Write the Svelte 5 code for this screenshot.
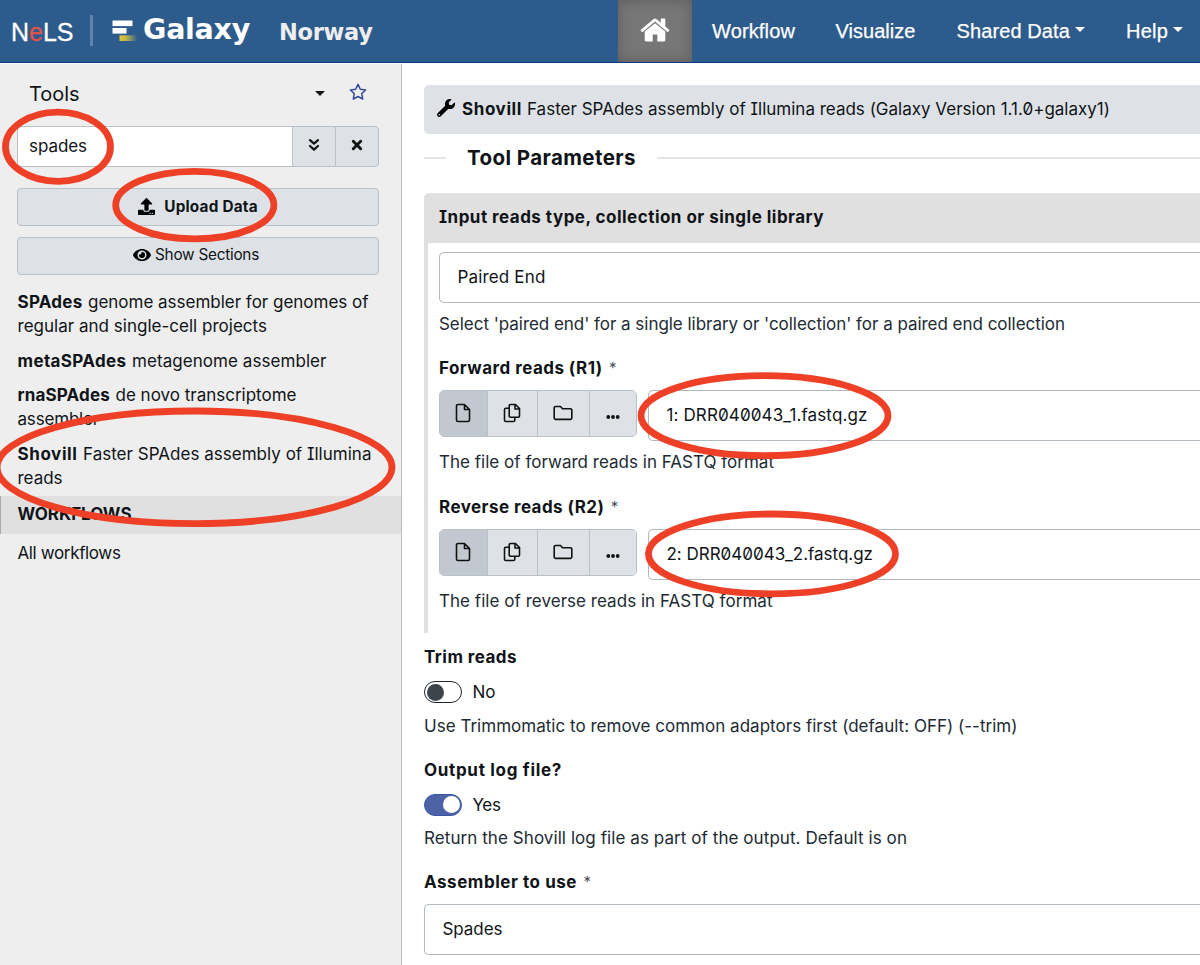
<script>
  // Spreads a run of text to the given width through its letter spacing.
  function fit(node, width) {
    node.style.letterSpacing = '0px';
    const natural = node.getBoundingClientRect().width;
    node.style.letterSpacing = (width - natural) / node.textContent.length + 'px';
  }

  const tools = [
    { lines: [[['SPAdes', 65, true], ['genome assembler for genomes of', 280.5]], [['regular and single-cell projects', 249.5]]] },
    { lines: [[['metaSPAdes', 109, true], ['metagenome assembler', 194.5]]] },
    { lines: [[['rnaSPAdes', 92.5, true], ['de novo transcriptome', 181]], [['assembler', 81.5]]] },
    { lines: [[['Shovill', 60, true], ['Faster SPAdes assembly of Illumina', 288.5]], [['reads', 45]]] }
  ];

  const inputs = [
    { label: 'Forward reads (R1)', lw: 163, file: '1: DRR040043_1.fastq.gz', fw: 201, help: 'The file of forward reads in FASTQ format', hw: 335 },
    { label: 'Reverse reads (R2)', lw: 165, file: '2: DRR040043_2.fastq.gz', fw: 206.5, help: 'The file of reverse reads in FASTQ format', hw: 333.5 }
  ];

  const rings = [
    [58, 146.7, 52.5, 34.6],
    [194.8, 205.1, 79.1, 33.8],
    [194.5, 467.3, 197.5, 56.3],
    [764.5, 415.7, 123.5, 40],
    [772, 553.9, 123.5, 39.9]
  ];
</script>

{#snippet text(value, width, bold = false)}
  <span class="text" class:bold use:fit={width}>{value}</span>
{/snippet}

<div class="app">
  <header>
    <div class="nels"><b class="text" use:fit={62.5}>N<span>e</span>LS</b></div>
    <div class="rule"></div>
    <svg class="logo" width="27" height="22" viewBox="0 0 27 22">
      <defs><linearGradient id="fade"><stop offset="0" stop-color="#d9c53c" /><stop offset=".35" stop-color="#c3b84a" /><stop offset="1" stop-color="#2d5b8b" /></linearGradient></defs>
      <rect x="0.5" y="0.5" width="20" height="5.6" fill="#fff" /><rect x="0.5" y="8" width="14" height="5.6" fill="#fff" /><rect x="7.5" y="15.3" width="18" height="5.7" fill="url(#fade)" />
    </svg>
    <div class="galaxy"><span class="text" use:fit={107}>Galaxy</span></div>
    <div class="norway"><span class="text" use:fit={93.5}>Norway</span></div>
    <nav>
      <div class="home">
        <svg width="32" height="32" viewBox="0 0 1792 1792" fill="#fff"><path d="M1472 992v480q0 26-19 45t-45 19h-384v-384h-256v384h-384q-26 0-45-19t-19-45v-480q0-1 .5-3t.5-3l575-474 575 474q1 2 1 6zm223-69l-62 74q-8 9-21 11h-3q-13 0-21-7l-692-577-692 577q-12 8-24 7-13-2-21-11l-62-74q-8-10-7-23.5t11-21.5l719-599q32-26 76-26t76 26l244 204v-195q0-14 9-23t23-9h192q14 0 23 9t9 23v408l219 182q10 8 11 21.5t-7 23.5z" /></svg>
      </div>
      <a><span class="text" use:fit={83}>Workflow</span></a>
      <a><span class="text" use:fit={80}>Visualize</span></a>
      <a><span class="text" use:fit={113.5}>Shared Data</span><i class="caret"></i></a>
      <a><span class="text" use:fit={42}>Help</span><i class="caret"></i></a>
    </nav>
  </header>

  <div class="body">
    <aside>
      <div class="title">
        <span class="text" use:fit={50.5}>Tools</span>
        <i class="caret"></i>
        <svg width="18" height="18" viewBox="0 0 18 18" fill="none" stroke="#344a9b" stroke-width="1.5" stroke-linejoin="round"><path d="M9 1.4l2.3 4.9 5.3.7-3.9 3.7 1 5.4L9 13.5l-4.7 2.6 1-5.4L1.4 7l5.3-.7z" /></svg>
      </div>
      <div class="search">
        <div class="field">{@render text('spades', 58)}</div>
        <button class="more"><svg width="12" height="14" viewBox="0 0 12 14" fill="none" stroke="#111" stroke-width="2.3" stroke-linecap="round" stroke-linejoin="round"><path d="M2 2.2l4 3.4 4-3.4M2 8l4 3.6L10 8" /></svg></button>
        <button class="clear"><svg width="12" height="12" viewBox="0 0 12 12" fill="none" stroke="#111" stroke-width="3" stroke-linecap="round"><path d="M2.3 2.3l7.4 7.4M9.7 2.3L2.3 9.7" /></svg></button>
      </div>
      <button class="wide upload">
        <svg width="17" height="17" viewBox="0 0 512 512"><path d="M296 384h-80c-13.3 0-24-10.7-24-24V192h-87.7c-17.8 0-26.7-21.5-14.1-34.1L242.3 5.7c7.5-7.5 19.8-7.5 27.3 0l152.2 152.2c12.6 12.6 3.7 34.1-14.1 34.1H320v168c0 13.3-10.7 24-24 24zm216-8v112c0 13.3-10.7 24-24 24H24c-13.3 0-24-10.7-24-24V376c0-13.3 10.7-24 24-24h136v8c0 30.9 25.1 56 56 56h80c30.9 0 56-25.1 56-56v-8h136c13.3 0 24 10.7 24 24zm-124 88c0-11-9-20-20-20s-20 9-20 20 9 20 20 20 20-9 20-20zm64 0c0-11-9-20-20-20s-20 9-20 20 9 20 20 20 20-9 20-20z" /></svg>
        {@render text('Upload Data', 93.5, true)}
      </button>
      <button class="wide sections">
        <svg width="18" height="16" viewBox="0 0 576 512"><path d="M572.52 241.4C518.29 135.59 410.93 64 288 64S57.68 135.64 3.48 241.41a32.35 32.35 0 0 0 0 29.19C57.71 376.41 165.07 448 288 448s230.32-71.64 284.52-177.41a32.35 32.35 0 0 0 0-29.19zM288 400a144 144 0 1 1 144-144 143.93 143.93 0 0 1-144 144zm0-240a95.31 95.31 0 0 0-25.31 3.79 47.85 47.85 0 0 1-66.9 66.9A95.78 95.78 0 1 0 288 160z" /></svg>
        {@render text('Show Sections', 104)}
      </button>
      <div class="tools">
        {#each tools as tool}
          <div class="tool">
            {#each tool.lines as line}
              <div class="line">{#each line as [value, width, bold]}{@render text(value, width, bold)}{/each}</div>
            {/each}
          </div>
        {/each}
      </div>
      <div class="workflows">{@render text('WORKFLOWS', 114, true)}</div>
      <div class="all">{@render text('All workflows', 103)}</div>
    </aside>

    <main>
      <div class="toolbar">
        <svg width="18" height="18" viewBox="0 0 512 512"><path d="M507.73 109.1c-2.24-9.03-13.54-12.09-20.12-5.51l-74.36 74.36-67.88-11.31-11.31-67.88 74.36-74.36c6.62-6.62 3.43-17.9-5.66-20.16-47.38-11.74-99.55.91-136.58 37.93-39.64 39.64-50.55 97.1-34.05 147.2L18.74 402.76c-24.99 24.99-24.99 65.51 0 90.5 24.99 24.99 65.51 24.99 90.5 0l213.21-213.21c50.12 16.71 107.47 5.68 147.37-34.22 37.07-37.07 49.7-89.32 37.91-136.73zM64 472c-13.25 0-24-10.75-24-24 0-13.26 10.75-24 24-24s24 10.74 24 24c0 13.25-10.75 24-24 24z" /></svg>
        {@render text('Shovill', 60, true)}
        {@render text('Faster SPAdes assembly of Illumina reads (Galaxy Version 1.1.0+galaxy1)', 583)}
      </div>
      <div class="divider"><i class="short"></i><h2><span class="text" use:fit={169}>Tool Parameters</span></h2><i class="long"></i></div>

      <section>
        <div class="head">{@render text('Input reads type, collection or single library', 385, true)}</div>
        <div class="content">
          <div class="select">{@render text('Paired End', 88)}</div>
          <div class="help">{@render text("Select 'paired end' for a single library or 'collection' for a paired end collection", 626)}</div>
          {#each inputs as input}
            <div class="label">{@render text(input.label, input.lw, true)}<span class="star">*</span></div>
            <div class="data">
              <div class="group">
                <button class="on"><svg width="16" height="20" viewBox="0 0 16 20"><path d="M3 1.5h6.5l5 5V17a1.5 1.5 0 0 1-1.5 1.5H3A1.5 1.5 0 0 1 1.5 17V3A1.5 1.5 0 0 1 3 1.5zM9.5 1.5v5h5" /></svg></button>
                <button><svg width="18" height="20" viewBox="0 0 18 20"><path d="M7.5 1.5h5l4 4V13a1.3 1.3 0 0 1-1.3 1.3H7.5A1.3 1.3 0 0 1 6.2 13V2.8A1.3 1.3 0 0 1 7.5 1.5zM12 1.5v4.5h4.5M6 5.3H2.8A1.3 1.3 0 0 0 1.5 6.6v10.6a1.3 1.3 0 0 0 1.3 1.3h7.7a1.3 1.3 0 0 0 1.3-1.3v-2.7" /></svg></button>
                <button><svg width="20" height="16" viewBox="0 0 20 16"><path d="M2.5 1.5h5l2 2.3h8a1.3 1.3 0 0 1 1.3 1.3v8a1.3 1.3 0 0 1-1.3 1.3h-15a1.3 1.3 0 0 1-1.3-1.3V2.8a1.3 1.3 0 0 1 1.3-1.3z" /></svg></button>
                <button><svg class="dots" width="14" height="4" viewBox="0 0 14 4"><circle cx="2.3" cy="2" r="1.9" /><circle cx="7" cy="2" r="1.9" /><circle cx="11.7" cy="2" r="1.9" /></svg></button>
              </div>
              <div class="select">{@render text(input.file, input.fw)}</div>
            </div>
            <div class="help">{@render text(input.help, input.hw)}</div>
          {/each}
        </div>
      </section>

      <div class="label first">{@render text('Trim reads', 93, true)}</div>
      <div class="switch"><i class="track"></i>{@render text('No', 23)}</div>
      <div class="help">{@render text('Use Trimmomatic to remove common adaptors first (default: OFF) (--trim)', 593.5)}</div>
      <div class="label">{@render text('Output log file?', 138, true)}</div>
      <div class="switch"><i class="track checked"></i>{@render text('Yes', 28)}</div>
      <div class="help">{@render text('Return the Shovill log file as part of the output. Default is on', 483)}</div>
      <div class="label">{@render text('Assembler to use', 153, true)}<span class="star">*</span></div>
      <div class="select">{@render text('Spades', 60)}</div>
    </main>
  </div>

  <svg class="rings" width="1200" height="965" viewBox="0 0 1200 965">
    {#each rings as [cx, cy, rx, ry]}<ellipse {cx} {cy} {rx} {ry} />{/each}
  </svg>
</div>

<style>
  :global(body) { margin: 0; overflow: hidden; }
  .app { position: relative; width: 1200px; height: 965px; overflow: hidden; display: flex; flex-direction: column; background: #fff; color: #101418; font: 17px/24px Inter, "Noto Sans", sans-serif; font-feature-settings: "zero", "cv08"; }
  .app * { box-sizing: border-box; }
  .text { display: inline-block; white-space: nowrap; flex: none; }
  .bold { font-weight: 700; }
  button { font: inherit; color: inherit; padding: 0; margin: 0; display: flex; align-items: center; justify-content: center; background: #dee2e6; border: 1px solid #b8c0c8; }
  .caret { width: 0; height: 0; border: 5.5px solid transparent; border-top-color: currentColor; border-bottom: 0; }

  header { height: 64px; flex: none; display: flex; align-items: center; background: #2d5b8b; border-bottom: 1px solid #fff; box-shadow: inset 0 -1px #063b80; color: #fff; font-family: "Liberation Sans", Arial, sans-serif; }
  .nels { width: 79px; padding-left: 11px; font-size: 25px; }
  .nels b { font-weight: 400; -webkit-text-stroke: .3px; }
  .nels span { color: #e0524b; }
  .rule { width: 3px; height: 31px; margin: -2px 0 0 11px; background: #5f83ab; }
  .logo { margin: -1px 0 0 19px; }
  .galaxy { margin: -3px 0 0 4px; font: bold 28.5px/34px "DejaVu Sans", sans-serif; }
  .norway { margin-left: 29px; font: bold 22.5px/26px "DejaVu Sans", sans-serif; color: #eee; }
  nav { margin-left: auto; height: 63px; align-self: flex-start; display: flex; font-size: 20px; padding-right: 17px; -webkit-text-stroke: .25px; }
  nav a { display: flex; align-items: center; margin-left: 41px; padding-bottom: 2px; }
  nav a:nth-child(2) { margin-left: 20px; }
  nav a:nth-child(3) { margin-left: 40.5px; }
  nav .caret { margin: -3px 0 0 5px; }
  .home { width: 74px; height: 62px; display: flex; align-items: center; justify-content: center; background: #777; box-shadow: inset 0 0 14px #5c5c5c; }
  .home svg { margin-top: -2px; }

  .body { display: flex; flex: 1; min-height: 0; }
  aside { width: 402px; flex: none; background: #eee; border-right: 1px solid #b8bcc2; }
  .title { height: 62px; display: flex; align-items: center; padding: 0 34px 2px 29px; font-size: 20px; }
  .title .caret { margin: -2px 24.5px 0 auto; border-width: 5.5px 5px 0; }
  .title svg { margin-top: -5px; }
  .search { display: flex; height: 41px; margin: 0 22px 0 17px; }
  .field { flex: 1; display: flex; align-items: center; padding: 0 0 1px 11px; background: #fff; border: 1px solid #b8c0c8; border-right: 0; border-radius: 4px 0 0 4px; }
  .more { width: 44px; padding-bottom: 3px; }
  .clear { width: 44px; margin-left: -1px; padding-bottom: 3px; border-radius: 0 4px 4px 0; }
  .wide { width: 362px; height: 38px; margin-left: 17px; border-radius: 4px; font-size: 15.3px; }
  .upload { margin-top: 21px; gap: 9px; padding-bottom: 1px; }
  .sections { margin-top: 11px; gap: 4px; padding: 0 4px 2px 0; }
  .tools { padding: 15px 0 0 17.5px; }
  .tool { margin-bottom: 10.5px; }
  .line { display: flex; gap: 5.5px; height: 24px; }
  .workflows { height: 38px; margin-top: -4px; padding: 6px 0 0 16.5px; background: #e0e0e0; border-left: 1px solid #aaa; }
  .all { padding: 7px 0 0 17.5px; }

  main { flex: 1; min-width: 0; padding: 21px 0 0 22px; }
  .toolbar { height: 49px; display: flex; align-items: center; gap: 5px; padding: 0 0 2px 13px; background: #dee2e6; border-radius: 5px 0 0 5px; }
  .toolbar svg { margin: -2px 2px 0 0; }
  .divider { height: 48px; display: flex; align-items: center; }
  .divider i { height: 2px; background: #e5e5e5; }
  .short { width: 22px; }
  .long { flex: 1; margin-left: 21px; }
  h2 { margin: 0 0 0 21px; font-size: 20.5px; font-weight: 700; }
  section { margin-top: 11px; border-left: 4px solid #e0e0e0; border-radius: 5px 0 0 0; }
  .head { height: 50px; margin-left: -1px; display: flex; align-items: center; padding: 0 0 3px 12px; background: #e0e0e0; }
  .content { padding: 9px 0 18px 11px; }
  .select { height: 51px; display: flex; align-items: center; padding: 0 0 1px 17.5px; background: #fff; border: 1px solid #b0b8c0; border-right: 0; border-radius: 5px 0 0 5px; }
  .help { height: 24px; margin-top: 9px; color: #212a33; }
  .label { height: 24px; margin: 20px 0 10px; display: flex; }
  .content .data + .help { margin-bottom: 21px; }
  .content .help:last-child { margin-bottom: 2px; }
  .label.first { margin-top: 12px; }
  .star { margin-left: 6.5px; font-size: 15px; color: #495057; }
  .data { display: flex; align-items: flex-start; }
  .data .select { flex: 1; margin-left: 11px; }
  .group { display: flex; height: 47px; width: 198px; border-radius: 5px; overflow: hidden; border: 1px solid #b8c0c8; }
  .group button { border: 0; border-left: 1px solid #b8c0c8; width: 52px; padding: 0 1px 2px 0; }
  .group button:nth-child(2) { width: 50px; }
  .group button.on { width: 47px; border: 0; background: #c1c8cf; }
  .group button:last-child { width: 47px; padding-top: 8px; }
  .group svg { fill: none; stroke: #111; stroke-width: 1.6; stroke-linejoin: round; }
  .group .dots { fill: #111; stroke: none; }
  .switch { height: 26px; display: flex; align-items: center; gap: 10.5px; }
  .switch + .help { margin-top: 8.5px; }
  .track { width: 38px; height: 22px; border: 1.5px solid #212529; border-radius: 11px; display: flex; align-items: center; padding: 0 1.5px; }
  .track::before { content: ""; width: 17px; height: 17px; border-radius: 50%; background: #3c444c; }
  .track.checked { background: #4d63a5; border-color: #3a55a5; justify-content: flex-end; }
  .track.checked::before { background: #fff; }

  .rings { position: absolute; left: 0; top: 0; pointer-events: none; fill: none; stroke: #ed4026; stroke-width: 6.8; }
</style>
